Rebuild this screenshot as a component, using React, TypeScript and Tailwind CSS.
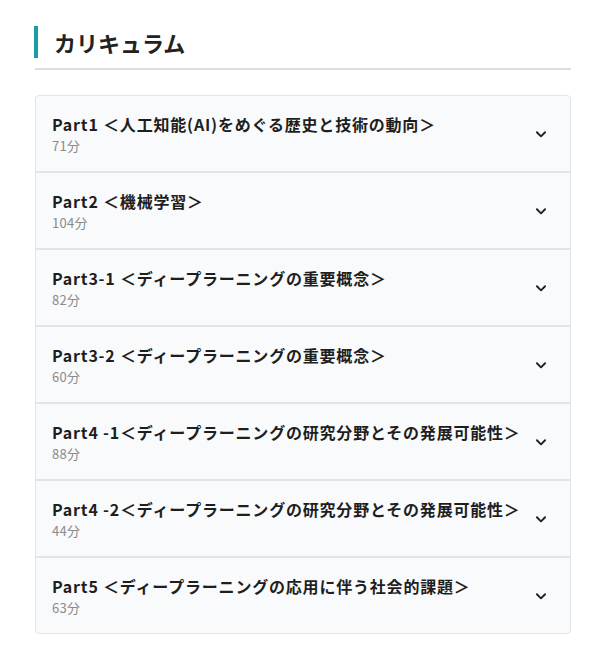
import React from 'react';

const parts = [
  { title: 'Part1 ＜人工知能(AI)をめぐる歴史と技術の動向＞', time: '71分' },
  { title: 'Part2 ＜機械学習＞', time: '104分' },
  { title: 'Part3-1 ＜ディープラーニングの重要概念＞', time: '82分' },
  { title: 'Part3-2 ＜ディープラーニングの重要概念＞', time: '60分' },
  { title: 'Part4 -1＜ディープラーニングの研究分野とその発展可能性＞', time: '88分' },
  { title: 'Part4 -2＜ディープラーニングの研究分野とその発展可能性＞', time: '44分' },
  { title: 'Part5 ＜ディープラーニングの応用に伴う社会的課題＞', time: '63分' },
];

function Chevron() {
  return (
    <svg width="14" height="14" viewBox="0 0 24 24" fill="none" stroke="#1f1f1f" strokeWidth="3.2" strokeLinecap="round" strokeLinejoin="round">
      <path d="M5 9l7 7 7-7" />
    </svg>
  );
}

export default function App() {
  return (
    <div className="min-h-screen bg-white pl-[35px] pr-[28px] pt-[26px] text-[#222]" style={{ fontFamily: '"Noto Sans CJK JP", "Noto Sans", sans-serif' }}>
      {/* heading */}
      <div className="border-b-2 border-[#dedede] pb-[10px]">
        <div className="flex items-center">
          <div className="w-[4px] h-[32px] bg-[#1a9ca6] -ml-px" />
          <h2 className="ml-[16px] text-[22px] font-bold leading-[32px]">カリキュラム</h2>
        </div>
      </div>

      {/* list */}
      <div className="mt-[25px] rounded-[4px] border border-[#e3e5e8] bg-[#f9fafb] overflow-hidden">
        {parts.map((p, i) => (
          <div
            key={i}
            className={`flex items-center justify-between pl-[16px] pr-[22px] ${i > 0 ? 'h-[77px] border-t-2 border-[#e3e4e6]' : 'h-[75px]'}`}
          >
            <div className="flex flex-col">
              <span className="text-[16px] font-bold leading-[24px] tracking-[0.05em] text-[#1e1e1e]">{p.title}</span>
              <span className="text-[13px] leading-[19px] tracking-[0.02em] text-[#8a8a8a]">{p.time}</span>
            </div>
            <Chevron />
          </div>
        ))}
      </div>
    </div>
  );
}
